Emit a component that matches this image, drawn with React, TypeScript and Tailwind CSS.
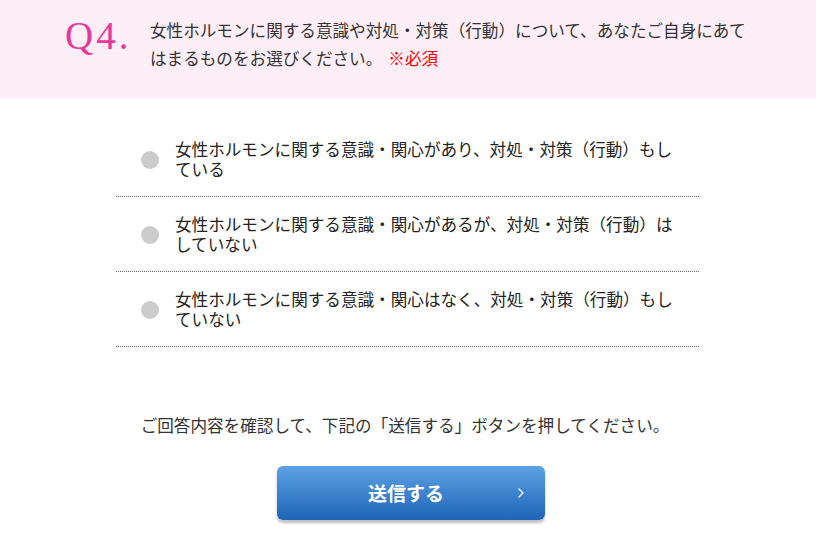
const font = { fontFamily: '"Noto Sans CJK JP", "Noto Sans", sans-serif' };

const options = [
  '女性ホルモンに関する意識・関心があり、対処・対策（行動）もしている',
  '女性ホルモンに関する意識・関心があるが、対処・対策（行動）はしていない',
  '女性ホルモンに関する意識・関心はなく、対処・対策（行動）もしていない',
];

export default function App() {
  return (
    <div className="w-[816px] h-[551px] bg-white text-[#333]" style={font}>
      {/* question header */}
      <div className="h-[98px] bg-[#fdeef8] flex items-start pt-[16px] pl-[65px]">
        <div
          className="w-[85px] text-[39px] leading-[38px] text-[#e6399a] tracking-[3px] pt-[1px]"
          style={{ fontFamily: '"Liberation Serif", serif' }}
        >
          Q4.
        </div>
        <div className="w-[608px] text-[16.6px] leading-[28px]">
          女性ホルモンに関する意識や対処・対策（行動）について、あなたご自身にあてはまるものをお選びください。
          <span className="pl-[6px] text-[#f00]">※必須</span>
        </div>
      </div>

      {/* answers */}
      <div className="w-[583px] ml-[116px] mt-[24px]">
        {options.map((o) => (
          <label
            key={o}
            className="h-[75px] flex items-center pl-[25px] border-b border-dotted border-[#666] cursor-pointer"
          >
            <span className="w-[18px] h-[18px] rounded-full bg-[#cccccc] shrink-0 mt-[2px]" />
            <span className="ml-[16px] w-[508px] text-[16.6px] leading-[20px] text-[#222]">{o}</span>
          </label>
        ))}
      </div>

      <p className="mt-[68px] text-center text-[16.6px] leading-[20px] pr-[6px]">
        ご回答内容を確認して、下記の「送信する」ボタンを押してください。
      </p>

      <div className="flex justify-center mt-[31px] pl-[6px]">
        <button className="relative w-[268px] h-[54px] rounded-[6px] bg-gradient-to-b from-[#5ca2e3] to-[#1d65b7] shadow-[0_3px_3px_rgba(0,0,0,0.25)] text-white text-[19px] font-bold flex items-center justify-center pr-[10px]">
          送信する
          <svg
            className="absolute right-[20px] top-1/2 -translate-y-1/2"
            width="8"
            height="12"
            viewBox="0 0 8 12"
            fill="none"
          >
            <path d="M1.5 1.5L6 6L1.5 10.5" stroke="white" strokeWidth="1.3" />
          </svg>
        </button>
      </div>
    </div>
  );
}
